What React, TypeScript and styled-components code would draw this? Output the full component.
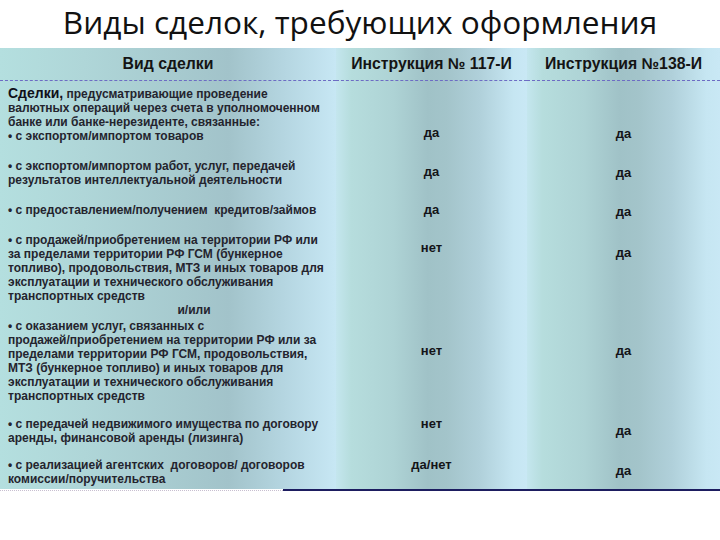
import React from "react";
import styled, { createGlobalStyle } from "styled-components";

const Global = createGlobalStyle`
  html, body { margin: 0; padding: 0; background: #ffffff; }
  #root { width: 720px; height: 540px; overflow: hidden; }
`;

const Page = styled.div`
  width: 720px;
  height: 540px;
  display: flex;
  flex-direction: column;
  background: #ffffff;
`;

const Title = styled.h1`
  margin: 0;
  height: 48px;
  font-family: "Open Sans", "Noto Sans", sans-serif;
  font-weight: 400;
  font-size: 31.6px;
  line-height: 44px;
  color: #111111;
  text-align: center;
`;

const Table = styled.div`
  display: grid;
  grid-template-columns: 336px 191px 193px;
`;

const firstGrad = `linear-gradient(to right, #b4dfdf 0%, #afd6d8 25%, #a6c9ce 55%, #a2c3ca 68%, #b4d5e0 84%, #c7e7f4 100%)`;
const otherGrad = `linear-gradient(to right, #c4e6ee 0%, #b6dddd 8%, #aed3d5 30%, #a0c2c7 48%, #a3c4ca 58%, #b0d0da 75%, #c6e6f2 93%, #c9e8f5 100%)`;

const HeadCell = styled.div<{ $first?: boolean }>`
  height: 32px;
  display: flex;
  align-items: center;
  justify-content: center;
  background: ${(p) => (p.$first ? firstGrad : otherGrad)};
  border-bottom: 1px dashed #6d6cc4;
  font-family: "Liberation Sans", Arial, sans-serif;
  font-weight: 700;
  font-size: 15.8px;
  color: #141414;
`;

const TextCell = styled.div<{ $pt: number; $pb: number }>`
  background: ${firstGrad};
  padding: ${(p) => p.$pt}px 4px ${(p) => p.$pb}px 8px;
  font-family: "Liberation Sans", Arial, sans-serif;
  font-weight: 700;
  font-size: 12px;
  line-height: 14px;
  color: #24242e;
`;

const Line = styled.div<{ $center?: boolean }>`
  white-space: pre;
  text-align: ${(p) => (p.$center ? "center" : "left")};
  padding-left: ${(p) => (p.$center ? "48px" : "0")};
`;

const Lead = styled.span`
  font-size: 14px;
  color: #101018;
`;

const ValueCell = styled.div<{ $pt: number }>`
  background: ${otherGrad};
  padding-top: ${(p) => p.$pt}px;
  text-align: center;
  font-family: "Liberation Sans", Arial, sans-serif;
  font-weight: 700;
  font-size: 13px;
  line-height: 14px;
  color: #141418;
`;

const BottomRule = styled.div`
  display: flex;
  align-items: flex-start;
`;

const DottedPart = styled.div`
  width: 283px;
  border-top: 1px dotted #c8bfd0;
  margin-top: 1px;
`;

const SolidPart = styled.div`
  flex: 1;
  height: 2px;
  background: #1d1d60;
`;

type Row = {
  pt: number;
  pb: number;
  lines: React.ReactNode[];
  a: string;
  b: string;
  aTop: number;
  bTop: number;
};

const rows: Row[] = [
  {
    pt: 5,
    pb: 8,
    lines: [
      <>
        <Lead>Сделки,</Lead> предусматривающие проведение
      </>,
      "валютных операций через счета в уполномоченном",
      "банке или банке-нерезиденте, связанные:",
      "• с экспортом/импортом товаров",
    ],
    a: "да",
    b: "да",
    aTop: 45,
    bTop: 46,
  },
  {
    pt: 8,
    pb: 8,
    lines: [
      "• с экспортом/импортом работ, услуг, передачей",
      "результатов интеллектуальной деятельности",
    ],
    a: "да",
    b: "да",
    aTop: 14,
    bTop: 15,
  },
  {
    pt: 8,
    pb: 8,
    lines: ["• с предоставлением/получением  кредитов/займов"],
    a: "да",
    b: "да",
    aTop: 8,
    bTop: 10,
  },
  {
    pt: 8,
    pb: 0,
    lines: [
      "• с продажей/приобретением на территории РФ или",
      "за пределами территории РФ ГСМ (бункерное",
      "топливо), продовольствия, МТЗ и иных товаров для",
      "эксплуатации и технического обслуживания",
      "транспортных средств",
      "и/или",
    ],
    a: "нет",
    b: "да",
    aTop: 16,
    bTop: 21,
  },
  {
    pt: 2,
    pb: 8,
    lines: [
      "• с оказанием услуг, связанных с",
      "продажей/приобретением на территории РФ или за",
      "пределами территории РФ ГСМ, продовольствия,",
      "МТЗ (бункерное топливо) и иных товаров для",
      "эксплуатации и технического обслуживания",
      "транспортных средств",
    ],
    a: "нет",
    b: "да",
    aTop: 27,
    bTop: 27,
  },
  {
    pt: 6,
    pb: 6,
    lines: [
      "• с передачей недвижимого имущества по договору",
      "аренды, финансовой аренды (лизинга)",
    ],
    a: "нет",
    b: "да",
    aTop: 6,
    bTop: 13,
  },
  {
    pt: 7,
    pb: 3,
    lines: [
      "• с реализацией агентских  договоров/ договоров",
      "комиссии/поручительства",
    ],
    a: "да/нет",
    b: "да",
    aTop: 7,
    bTop: 13,
  },
];

export default function App() {
  return (
    <Page>
      <Global />
      <Title>Виды сделок, требующих оформления</Title>
      <Table>
        <HeadCell $first>Вид сделки</HeadCell>
        <HeadCell>Инструкция № 117-И</HeadCell>
        <HeadCell>Инструкция №138-И</HeadCell>
        {rows.map((r, i) => (
          <React.Fragment key={i}>
            <TextCell $pt={r.pt} $pb={r.pb}>
              {r.lines.map((l, j) => (
                <Line key={j} $center={l === "и/или"}>
                  {l}
                </Line>
              ))}
            </TextCell>
            <ValueCell $pt={r.aTop}>{r.a}</ValueCell>
            <ValueCell $pt={r.bTop}>{r.b}</ValueCell>
          </React.Fragment>
        ))}
      </Table>
      <BottomRule>
        <DottedPart />
        <SolidPart />
      </BottomRule>
    </Page>
  );
}
